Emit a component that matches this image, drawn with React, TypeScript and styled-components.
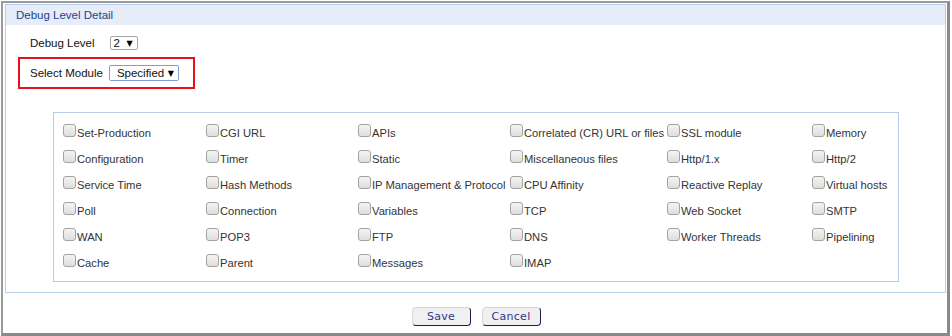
import React from "react";
import styled, { createGlobalStyle } from "styled-components";

const Global = createGlobalStyle`
  html, body { margin: 0; padding: 0; background: #fff; }
  body { font-family: "Liberation Sans", Arial, sans-serif; font-size: 12px; color: #222; }
`;

const Frame = styled.div`
  box-sizing: border-box;
  margin: 1px 0 0 1px;
  width: 949px;
  height: 335px;
  border-top: 2px solid #9a9a9a;
  border-left: 2px solid #9a9a9a;
  border-right: 3px solid #8a8a8a;
  border-bottom: 3px solid #8a8a8a;
  padding: 1px 1px 0 2px;
  display: flex;
  flex-direction: column;
`;

const Panel = styled.div`
  box-sizing: border-box;
  height: 289px;
  border: 1px solid #b7cdec;
  display: flex;
  flex-direction: column;
`;

const Header = styled.div`
  height: 20px;
  line-height: 20px;
  background: #e6edf9;
  color: #1d3f92;
  padding-left: 10px;
  font-size: 11.5px;
`;

const FieldRow = styled.div`
  display: flex;
  align-items: center;
  margin-top: 10px;
  padding-left: 24px;
  height: 16px;
`;

const Highlight = styled.div`
  box-sizing: border-box;
  margin: 6px 0 0 12px;
  width: 177px;
  height: 32px;
  border: 2px solid #e8101a;
  display: flex;
  align-items: center;
  padding-left: 10px;
`;

const Label = styled.span<{ $gap: number }>`
  color: #111;
  font-size: 11.5px;
  margin-right: ${(p) => p.$gap}px;
`;

const Select = styled.span<{ $w: number; $h: number; $focus?: boolean }>`
  box-sizing: border-box;
  display: inline-flex;
  align-items: center;
  justify-content: space-between;
  width: ${(p) => p.$w}px;
  height: ${(p) => p.$h}px;
  border: 1px solid ${(p) => (p.$focus ? "#7b9fd6" : "#a6a6a6")};
  border-radius: 2px;
  padding: 0 4px 0 ${(p) => (p.$focus ? 7 : 3)}px;
  font-size: 11.5px;
  color: #111;
  background: #fff;
`;

const Arrow = styled.span`
  font-family: "DejaVu Sans", sans-serif;
  font-size: 8px;
  color: #000;
`;

const Modules = styled.div`
  box-sizing: border-box;
  margin: 23px 46px 0 47px;
  height: 170px;
  border: 1px solid #b7cdec;
  padding: 7px 0 0 9px;
  display: grid;
  grid-template-columns: 143px 152px 152px 157px 145px 1fr;
  grid-auto-rows: 26px;
`;

const Item = styled.label`
  line-height: 26px;
  white-space: nowrap;
  color: #333;
  font-size: 11.2px;
`;

const Box = styled.input`
  appearance: none;
  -webkit-appearance: none;
  box-sizing: border-box;
  width: 13px;
  height: 13px;
  margin: 0 1px 0 0;
  vertical-align: baseline;
  border: 1px solid #a3a3a3;
  border-radius: 3px;
  background: linear-gradient(#f4f4f4, #dedede);
`;

const Footer = styled.div`
  display: flex;
  justify-content: center;
  gap: 11px;
  margin-top: 14px;
  padding-left: 1px;
`;

const Button = styled.button`
  box-sizing: border-box;
  width: 59px;
  height: 19px;
  padding: 0;
  background: #f0f0f0;
  border-top: 1px solid #d8d8d8;
  border-left: 1px solid #d8d8d8;
  border-right: 1px solid #1c1c50;
  border-bottom: 1px solid #1c1c50;
  border-radius: 4px;
  font-family: "DejaVu Sans", Verdana, sans-serif;
  font-size: 11px;
  color: #35358a;
  letter-spacing: 0.3px;
`;

const modules = [
  "Set-Production", "CGI URL", "APIs", "Correlated (CR) URL or files", "SSL module", "Memory",
  "Configuration", "Timer", "Static", "Miscellaneous files", "Http/1.x", "Http/2",
  "Service Time", "Hash Methods", "IP Management & Protocol", "CPU Affinity", "Reactive Replay", "Virtual hosts",
  "Poll", "Connection", "Variables", "TCP", "Web Socket", "SMTP",
  "WAN", "POP3", "FTP", "DNS", "Worker Threads", "Pipelining",
  "Cache", "Parent", "Messages", "IMAP",
];

export default function App() {
  return (
    <>
      <Global />
      <Frame>
        <Panel>
          <Header>Debug Level Detail</Header>
          <FieldRow>
            <Label $gap={15}>Debug Level</Label>
            <Select $w={28} $h={14}>
              2 <Arrow>▼</Arrow>
            </Select>
          </FieldRow>
          <Highlight>
            <Label $gap={6}>Select Module</Label>
            <Select $w={70} $h={16} $focus>
              Specified <Arrow>▼</Arrow>
            </Select>
          </Highlight>
          <Modules>
            {modules.map((m) => (
              <Item key={m}>
                <Box type="checkbox" />
                {m}
              </Item>
            ))}
          </Modules>
        </Panel>
        <Footer>
          <Button>Save</Button>
          <Button>Cancel</Button>
        </Footer>
      </Frame>
    </>
  );
}
